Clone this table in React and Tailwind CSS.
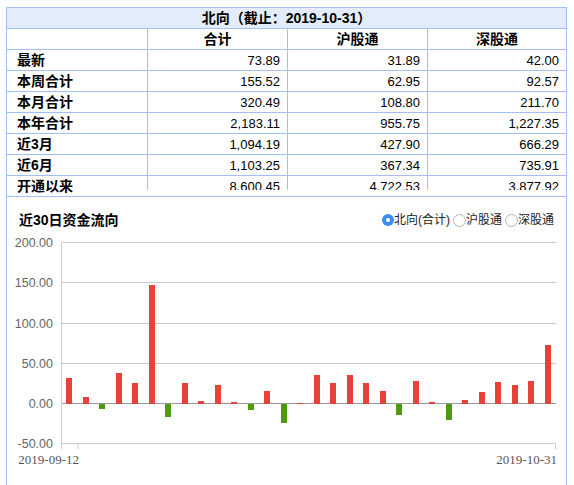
const rows = [
  ["最新", "73.89", "31.89", "42.00"],
  ["本周合计", "155.52", "62.95", "92.57"],
  ["本月合计", "320.49", "108.80", "211.70"],
  ["本年合计", "2,183.11", "955.75", "1,227.35"],
  ["近3月", "1,094.19", "427.90", "666.29"],
  ["近6月", "1,103.25", "367.34", "735.91"],
];
const lastRow = ["开通以来", "8,600.45", "4,722.53", "3,877.92"];

const flows = [
  32.7, 9.1, -6.2, 38.9, 26.5, 148.5, -16.2, 26.5, 4.1, 24.0,
  2.5, -7.5, 16.5, -23.3, 0.6, 36.4, 26.5, 36.4, 26.5, 16.5,
  -13.7, 29.0, 2.9, -19.9, 5.3, 15.3, 27.7, 24.0, 29.0, 73.89,
];

const font = { fontFamily: '"Liberation Sans", "Noto Sans CJK SC", sans-serif' };

// page y -> svg y (svg starts at page y 232, x 7)
const Y0 = 232;
const X0 = 7;
const yOf = (v) => 403 - v * 0.804 - Y0;

const FlowChart = () => {
  const ticks = [200, 150, 100, 50, 0, -50];
  const left = 61 - X0;
  const right = 556 - X0;
  const band = (right - left) / 30;
  return (
    <svg width="558" height="253" className="block">
      {ticks.map((t) => {
        const y = Math.round(yOf(t)) + 0.5;
        const stroke = t === 0 ? "#999999" : t === -50 ? "#c5cdd9" : "#c8c8c8";
        return (
          <g key={t}>
            <line x1={left} x2={right} y1={y} y2={y} stroke={stroke} strokeWidth="1" />
            <text
              x={53 - X0}
              y={y + 4}
              textAnchor="end"
              fontSize="12.5"
              fill="#666"
              fontFamily="Liberation Sans, sans-serif"
            >
              {t.toFixed(2)}
            </text>
          </g>
        );
      })}
      <line x1={left + 0.5} x2={left + 0.5} y1={Math.round(yOf(200))} y2={449 - Y0} stroke="#c5cdd9" />
      <line x1={left + band + 0.5} x2={left + band + 0.5} y1={443 - Y0} y2={449 - Y0} stroke="#c5cdd9" />
      <line x1={right - 0.5} x2={right - 0.5} y1={443 - Y0} y2={449 - Y0} stroke="#c5cdd9" />
      {flows.map((v, i) => {
        const x = Math.round(left + i * band + 5);
        const zero = Math.round(yOf(0)) + 1;
        const h = Math.max(1, Math.round(Math.abs(v) * 0.804));
        return (
          <rect
            key={i}
            x={x}
            y={v >= 0 ? zero - h : zero}
            width="6"
            height={h}
            fill={v >= 0 ? "#e8413a" : "#4f9b10"}
          />
        );
      })}
      <text x={79 - X0} y={464 - Y0} textAnchor="end" fontSize="13" fill="#555" fontFamily="Liberation Serif, serif">
        2019-09-12
      </text>
      <text x={557 - X0} y={464 - Y0} textAnchor="end" fontSize="13" fill="#555" fontFamily="Liberation Serif, serif">
        2019-10-31
      </text>
    </svg>
  );
};

const Radio = ({ checked, label }) => (
  <label className="flex items-center">
    {checked ? (
      <span className="flex h-[12px] w-[12px] items-center justify-center rounded-full bg-[#3b8ef3]">
        <span className="h-[4px] w-[4px] rounded-full bg-white" />
      </span>
    ) : (
      <span className="h-[13px] w-[13px] rounded-full border border-[#b5b5b5] bg-white" />
    )}
    <span>{label}</span>
  </label>
);

export default function App() {
  return (
    <div className="bg-white pl-[6px] pt-[7px]" style={font}>
      <div className="h-[478px] w-[561px] overflow-hidden border-x border-t border-[#a3bff5]">
        {/* 表格 */}
        <div className="border-b border-[#a3bff5] pb-[6px] text-black">
          <div className="flex h-[21px] items-center justify-center border-b border-[#a3bff5] bg-[#e3ecfa] text-[14px] font-bold">
            北向（截止：2019-10-31）
          </div>
          <div className="grid h-[21px] grid-cols-[141px_140px_140px_138px] border-b border-[#a3bff5] text-[14px] font-bold">
            <div className="border-r border-[#a3bff5]" />
            <div className="flex items-center justify-center border-r border-[#a3bff5]">合计</div>
            <div className="flex items-center justify-center border-r border-[#a3bff5]">沪股通</div>
            <div className="flex items-center justify-center">深股通</div>
          </div>
          {rows.map((r) => (
            <div
              key={r[0]}
              className="grid h-[21px] grid-cols-[141px_140px_140px_138px] border-b border-[#a3bff5]"
            >
              <div className="flex items-center border-r border-[#a3bff5] pl-[10px] text-[14px] font-bold">
                {r[0]}
              </div>
              <div className="flex items-center justify-end border-r border-[#a3bff5] pr-[7px] text-[13px]">
                {r[1]}
              </div>
              <div className="flex items-center justify-end border-r border-[#a3bff5] pr-[7px] text-[13px]">
                {r[2]}
              </div>
              <div className="flex items-center justify-end pr-[7px] text-[13px]">{r[3]}</div>
            </div>
          ))}
          <div className="grid h-[14px] grid-cols-[141px_140px_140px_138px] grid-rows-[14px]">
            <div className="h-[14px] border-r border-[#a3bff5] pl-[10px] pt-[3px] text-[14px] font-bold leading-[14px]">
              {lastRow[0]}
            </div>
            <div className="h-[14px] overflow-hidden border-r border-[#a3bff5] pr-[7px] pt-[3px] text-right text-[13px] leading-[15px]">
              {lastRow[1]}
            </div>
            <div className="h-[14px] overflow-hidden border-r border-[#a3bff5] pr-[7px] pt-[3px] text-right text-[13px] leading-[15px]">
              {lastRow[2]}
            </div>
            <div className="h-[14px] overflow-hidden pr-[7px] pt-[3px] text-right text-[13px] leading-[15px]">
              {lastRow[3]}
            </div>
          </div>
        </div>

        {/* 近30日资金流向 */}
        <div className="flex h-[35px] items-start justify-between pl-3 pr-3 pt-[13px]">
          <span className="text-[14px] font-bold leading-5 text-black">近30日资金流向</span>
          <div className="flex items-center gap-[3px] text-[12px] leading-5 text-[#222]">
            <Radio checked label="北向(合计)" />
            <Radio label="沪股通" />
            <Radio label="深股通" />
          </div>
        </div>
        <FlowChart />
      </div>
    </div>
  );
}
